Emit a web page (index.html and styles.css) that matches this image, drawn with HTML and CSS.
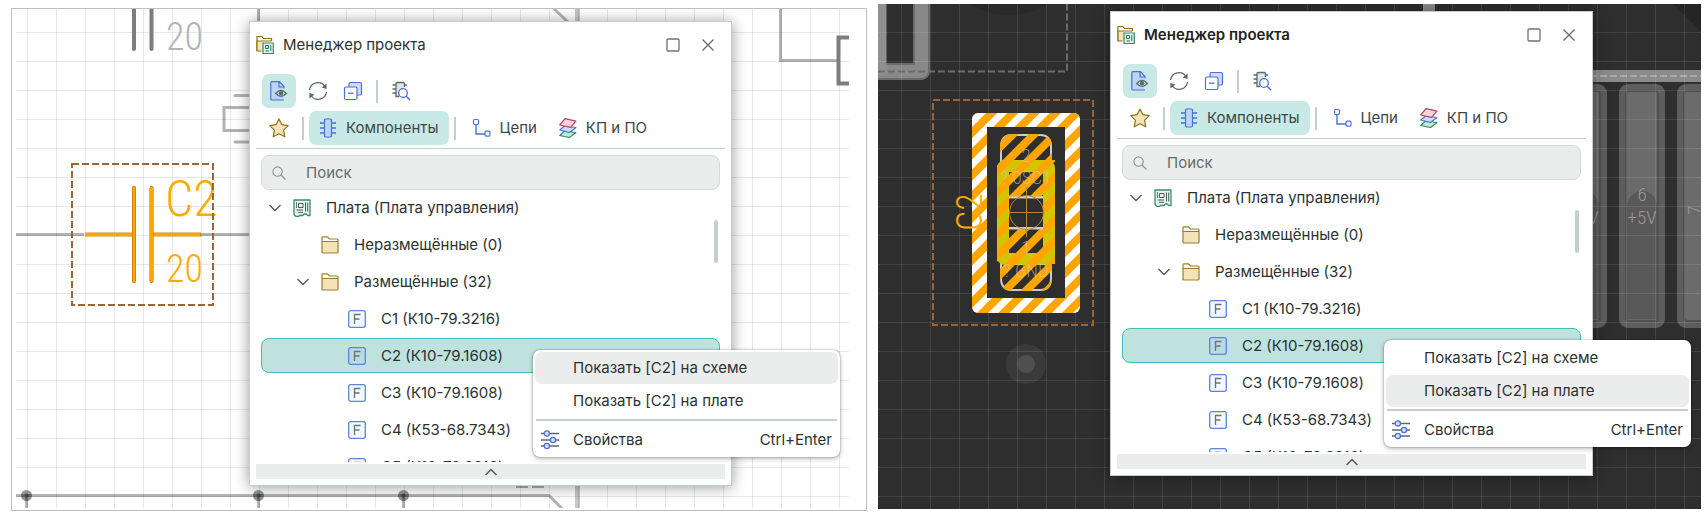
FILE: index.html
```html
<!DOCTYPE html>
<html lang="ru">
<head>
<meta charset="utf-8">
<title>Менеджер проекта</title>
<link rel="stylesheet" href="styles.css">
</head>
<body>
<svg class="sprite" aria-hidden="true">
  <symbol id="i-project" viewBox="0 0 18 20">
    <path d="M1 16V1.500h5l1.500 2h8V6" fill="#fff" stroke="#8c7318" stroke-width="1.200"/>
    <path d="M1 6h6.500v10H1z" fill="#f5e3b8"/><path d="M5.500 16H1V6h14.500" fill="none" stroke="#8c7318" stroke-width="1.200"/>
    <path d="M7 8h10.300v10.500H7z" fill="#e2f2ea" stroke="#3c8a68" stroke-width="1.200"/>
    <path d="M9.500 10.500h3v3h-3zM14.800 10v6M9.500 16h3.500" fill="none" stroke="#2c7a58" stroke-width="1"/>
  </symbol>
  <symbol id="i-docview" viewBox="0 0 20 20">
    <path d="M2 .7h8l4 4.300V19H2z" fill="#bdd4f5"/>
    <path d="M15 7.500V5.500L10.500.700H3Q1.800.700 1.800 2v16Q1.800 19 3 19h12M10 1v5h5" fill="none" stroke="#4a70dc" stroke-width="1.200"/>
    <path d="M6.800 12.500Q12 6.300 17.300 12.500 12 18.300 6.800 12.500z" fill="#c9e9e6" stroke="#5d6b69" stroke-width="1.400"/>
    <circle cx="12" cy="12.300" r="2.200" fill="#5d6b69"/>
  </symbol>
  <symbol id="i-refresh" viewBox="0 0 20 20">
    <path d="M1.500 9a8.500 8.500 0 0 1 15.500-3.500M18.500 11a8.500 8.500 0 0 1-15.500 3.500" fill="none" stroke="#5d6b69" stroke-width="1.300"/>
    <path d="M18.600 2.500v5.500l-5-1.500zM1.400 17.500v-5.500l5 1.500z" fill="#5d6b69"/>
  </symbol>
  <symbol id="i-collapse" viewBox="0 0 20 20">
    <rect x="6" y="1.500" width="12.500" height="12.500" rx="1.500" fill="#cddcf8" stroke="#4a70dc" stroke-width="1.200"/>
    <rect x="1.500" y="6" width="12.500" height="12.500" rx="1.500" fill="#fff" stroke="#4a70dc" stroke-width="1.200"/>
    <path d="M5 12.200h5.500" stroke="#4a70dc" stroke-width="1.300"/>
  </symbol>
  <symbol id="i-chipsearch" viewBox="0 0 20 20">
    <path d="M5 2h8v14H5z" fill="#dfe4e3"/>
    <path d="M13.500 6V2.500Q13.500 1.500 12.500 1.500h-6Q5 1.500 5 2.500v13h3M1.500 4H5M1.500 8H5M1.500 12H5M13.500 4H16" fill="none" stroke="#5d6b69" stroke-width="1.300"/>
    <circle cx="12" cy="12" r="4.300" fill="#fff" stroke="#4a70dc" stroke-width="1.300"/>
    <path d="M15.200 15.200l3.800 3.800" stroke="#4a70dc" stroke-width="1.400"/>
  </symbol>
  <symbol id="i-star" viewBox="0 0 20 20">
    <path d="M10 1l2.900 5.700 6.300.9-4.600 4.500 1.200 6.700L10 15.800l-5.800 3 1.200-6.700L.8 7.600l6.300-.9z" fill="#f5e3b8" stroke="#8c7318" stroke-width="1.200" stroke-linejoin="round"/>
  </symbol>
  <symbol id="i-chip" viewBox="0 0 20 20">
    <rect x="6.500" y="1" width="7" height="18" rx="1.200" fill="#bdd4f5" stroke="#4a70dc" stroke-width="1.200"/>
    <path d="M2 5h4.500M2 10h4.500M2 15h4.500M13.500 5H18M13.500 10H18M13.500 15H18" stroke="#4a70dc" stroke-width="1.300"/>
    <path d="M3 4.500v1M17 4.500v1" stroke="#4a70dc"/>
  </symbol>
  <symbol id="i-net" viewBox="0 0 20 20">
    <path d="M4 6.500v9.500h9" fill="none" stroke="#4a70dc" stroke-width="1.400"/>
    <rect x="1.500" y="1.500" width="5" height="5" rx="1.200" fill="#fff" stroke="#4a70dc" stroke-width="1.200"/>
    <rect x="13" y="13.200" width="5" height="5" rx="1.200" fill="#fff" stroke="#4a70dc" stroke-width="1.200"/>
  </symbol>
  <symbol id="i-layers" viewBox="0 0 20 20">
    <path d="M6.500 13l11.500 1.500-6.500 5L1.700 17.500z" fill="#c5ead9" stroke="#2f8a63" stroke-width="1.100" stroke-linejoin="round"/>
    <path d="M6.500 8l11.500 1.500-6.500 5L1.700 12z" fill="#cddcf8" stroke="#4a70dc" stroke-width="1.100" stroke-linejoin="round"/>
    <path d="M7 .6l11 2.500-5.500 6.300L1.700 7z" fill="#fad4d8" stroke="#b04a5c" stroke-width="1.200" stroke-linejoin="round"/>
  </symbol>
  <symbol id="i-search" viewBox="0 0 14 14">
    <circle cx="5.600" cy="5.600" r="4.700" fill="none" stroke="#8b9796" stroke-width="1.100"/><path d="M9 9l4.500 4.500" stroke="#8b9796" stroke-width="1.200"/>
  </symbol>
  <symbol id="i-board" viewBox="0 0 18 18">
    <path d="M1 1h16v15.500h-2.500l-1-1.500H11l-1 1.500H6.500l-1 1H3L1 15.500z" fill="#e6f4ee" stroke="#3c8a68" stroke-width="1.300" stroke-linejoin="round"/>
    <path d="M5.500 4.500H10v4H5.500zM12.500 3.500v9M14.700 3.500v9M3.500 11h6.500M5 13.300h5" fill="none" stroke="#4c5a58" stroke-width="1"/>
    <path d="M3.500 3v6" stroke="#4c5a58" stroke-width=".8"/>
  </symbol>
  <symbol id="i-folder" viewBox="0 0 18 18">
    <path d="M1 5.500h16V16q0 1-1 1H2q-1 0-1-1z" fill="#f5e3b8"/>
    <path d="M1 5.500V1.500Q1 .8 2 .8h4.500L8.500 3H16q1 0 1 1v12q0 1-1 1H2q-1 0-1-1zM1 5.500h16" fill="none" stroke="#98802a" stroke-width="1.200"/>
  </symbol>
  <symbol id="i-part" viewBox="0 0 18 18">
    <rect x=".7" y=".7" width="16.600" height="16.600" rx="2" fill="#4a70dc" fill-opacity=".06" stroke="#5f83e2" stroke-width="1.300"/>
    <path d="M6.500 14V4.500h6M6.500 9h5" fill="none" stroke="#6a7674" stroke-width="1.300"/>
  </symbol>
  <symbol id="i-down" viewBox="0 0 12 8"><path d="M0.500 1L6 6.500 11.500 1" fill="none" stroke="#4c5a58" stroke-width="1.300"/></symbol>
  <symbol id="i-up" viewBox="0 0 12 8"><path d="M0.500 7L6 1.500 11.500 7" fill="none" stroke="#4c5a58" stroke-width="1.500"/></symbol>
  <symbol id="i-max" viewBox="0 0 14 14"><rect x="1" y="1" width="12" height="12" rx="1" fill="none" stroke="#6a7674" stroke-width="1.300"/></symbol>
  <symbol id="i-close" viewBox="0 0 14 14"><path d="M1.500 1.500l11 11M12.500 1.500l-11 11" stroke="#5d6b69" stroke-width="1.300"/></symbol>
  <symbol id="i-props" viewBox="0 0 18 20">
    <path d="M0 3.500h18M0 10h18M0 16h18" stroke="#5d6b69" stroke-width="1.300"/>
    <g fill="#d5e2fb" stroke="#4a70dc" stroke-width="1.300"><circle cx="5.800" cy="3.500" r="2.600"/><circle cx="12" cy="10" r="2.600"/><circle cx="5.800" cy="16" r="2.600"/></g>
  </symbol>
</svg>

<main class="screens">
  <section class="pane pane-light">
    <svg class="drawing" aria-hidden="true">
      <defs>
        <pattern id="grid-light" x="15" y="23" width="29" height="29" patternUnits="userSpaceOnUse"><path d="M.5 0v29M0 .5h29" stroke="#000" stroke-opacity=".09"/></pattern>
      </defs>
      <svg class="sheet">
      <rect x="4" y="0" width="833" height="499" fill="url(#grid-light)"/>
      <g fill="none" stroke="#000" stroke-opacity=".3">
        <path d="M4 225.500h68M189 225.500h60" stroke-width="3"/>
        <path d="M240 98.500h-28v23h28M223 86.500h30M223 133h30" stroke-width="3" stroke-linecap="round"/>
        <path d="M4 486.500h533l14 14" stroke-width="3"/>
        <path d="M14.500 487v12M246.500 487v12M391.500 487v12M246.500 0v14M768.500 0v51.500h58" stroke-width="3"/>
        <path d="M542 0l14 13" stroke-width="3"/>
        <path d="M565.500 0v499" stroke-width="5" stroke-opacity=".22"/>
        <path d="M504 478h12M520 478h12" stroke-width="2"/>
      </g>
      <g stroke="#7d7d7d" stroke-width="4" fill="none" stroke-linecap="round"><path d="M122 0v40M139.500 0v40"/><path d="M838 28.500h-11.500v46H838"/></g>
      <g fill="#000" fill-opacity=".42"><circle cx="14.500" cy="486.500" r="5.500"/><circle cx="246.500" cy="486.500" r="5.500"/><circle cx="391.500" cy="486.500" r="5.500"/></g>
      <g fill="#444"><circle cx="14.500" cy="486.500" r="2"/><circle cx="246.500" cy="486.500" r="2"/><circle cx="391.500" cy="486.500" r="2"/></g>
      <text class="cad" x="154" y="41" font-size="38" fill="#b3b3b3">20</text>
      <path d="M73 225.500h49M139 225.500h50" stroke="#c98a1c" stroke-width="4"/>
      <path d="M73 225.500h49M139 225.500h49" stroke="#ffa500" stroke-width="3"/>
      <path d="M122 179v93M139.500 179v93" stroke="#a06a10" stroke-width="4" stroke-linecap="round"/>
      <path d="M122 179v93M139.500 179v93" stroke="#ffa500" stroke-width="3" stroke-linecap="round"/>
      <text class="cad" x="153" y="207" font-size="50" fill="#fa0">C2</text>
      <text class="cad" x="154" y="273" font-size="38" fill="#fa0">20</text>
      <rect x="60" y="155" width="141" height="141" fill="none" stroke="#9c6532" stroke-width="2" stroke-dasharray="7 3"/>
      </svg>
    </svg>
    <article class="manager manager-a">
      <header class="title">
        <svg class="i-title"><use href="#i-project"/></svg><h1>Менеджер проекта</h1>
        <button class="win" type="button" aria-label="Развернуть"><svg><use href="#i-max"/></svg></button>
        <button class="win" type="button" aria-label="Закрыть"><svg><use href="#i-close"/></svg></button>
      </header>
      <div class="tools">
        <button class="tool on" type="button" aria-label="Просмотр"><svg><use href="#i-docview"/></svg></button>
        <button class="tool" type="button" aria-label="Обновить"><svg><use href="#i-refresh"/></svg></button>
        <button class="tool" type="button" aria-label="Свернуть всё"><svg><use href="#i-collapse"/></svg></button>
        <span class="bar"></span>
        <button class="tool" type="button" aria-label="Найти компонент"><svg><use href="#i-chipsearch"/></svg></button>
      </div>
      <nav class="tabs">
        <button class="tab star" type="button" aria-label="Избранное"><svg><use href="#i-star"/></svg></button>
        <span class="bar"></span>
        <button class="tab on" type="button"><svg><use href="#i-chip"/></svg>Компоненты</button>
        <span class="bar"></span>
        <button class="tab" type="button"><svg><use href="#i-net"/></svg>Цепи</button>
        <button class="tab" type="button"><svg><use href="#i-layers"/></svg>КП и ПО</button>
      </nav>
      <label class="search"><svg><use href="#i-search"/></svg><input type="text" placeholder="Поиск" aria-label="Поиск"></label>
      <div class="body">
        <ul class="tree">
          <li class="l1"><button class="twist" type="button" aria-label="Свернуть"><svg><use href="#i-down"/></svg></button><svg class="ico"><use href="#i-board"/></svg>Плата (Плата управления)</li>
          <li class="l2"><span class="twist"></span><svg class="ico"><use href="#i-folder"/></svg>Неразмещённые (0)</li>
          <li class="l2"><button class="twist" type="button" aria-label="Свернуть"><svg><use href="#i-down"/></svg></button><svg class="ico"><use href="#i-folder"/></svg>Размещённые (32)</li>
          <li class="l3"><span class="twist"></span><svg class="ico"><use href="#i-part"/></svg>C1 (К10-79.3216)</li>
          <li class="l3 picked"><span class="twist"></span><svg class="ico"><use href="#i-part"/></svg>C2 (К10-79.1608)</li>
          <li class="l3"><span class="twist"></span><svg class="ico"><use href="#i-part"/></svg>C3 (К10-79.1608)</li>
          <li class="l3"><span class="twist"></span><svg class="ico"><use href="#i-part"/></svg>C4 (К53-68.7343)</li>
          <li class="l3"><span class="twist"></span><svg class="ico"><use href="#i-part"/></svg>C5 (К10-79.3216)</li>
        </ul>
        <span class="thumb"></span>
      </div>
      <button class="expand" type="button" aria-label="Развернуть панель"><svg><use href="#i-up"/></svg></button>
      <div class="menu menu-a">
        <button class="hover" type="button"><span class="mi"></span>Показать [C2] на схеме</button>
        <button type="button"><span class="mi"></span>Показать [C2] на плате</button>
        <hr>
        <button type="button"><svg class="mi"><use href="#i-props"/></svg>Свойства<kbd>Ctrl+Enter</kbd></button>
      </div>
    </article>
  </section>

  <section class="pane pane-dark">
    <svg class="drawing" aria-hidden="true">
      <defs>
        <pattern id="grid-dark" x="23" y="28" width="29" height="29" patternUnits="userSpaceOnUse"><path d="M.5 0v29M0 .5h29" stroke="#fff" stroke-opacity=".1"/></pattern>
        <pattern id="hatch" width="15" height="15" patternUnits="userSpaceOnUse" patternTransform="translate(99 118) rotate(45)"><rect width="8" height="15" fill="#ffa500"/></pattern>
      </defs>
      <circle cx="131" cy="-64" r="75" fill="#292929"/>
      <path d="M795 0l28 28V0z" fill="#252525"/>
      <path d="M0 67.500h43.500V0" fill="none" stroke="#6b6b6b" stroke-width="17" stroke-linejoin="round"/>
      <path d="M0 67.500h43.500V0" fill="none" stroke="#888" stroke-width="13" stroke-linejoin="round"/>
      <path d="M4 0v67" stroke="#8f8f8f" stroke-width="9" stroke-linecap="round"/>
      <path d="M0 67.500h189V0" fill="none" stroke="#6c6c6c" stroke-width="2" stroke-dasharray="7 3"/>
      <path d="M545 0h12v8h-12zM712 66h111v12H712z" fill="#8b8b8b"/>
      <path d="M712 72h111" stroke="#aaa" stroke-width="2" stroke-dasharray="7 3"/>
      <g fill="#5d5d5d"><rect x="683" y="80" width="46" height="244" rx="9"/><rect x="741" y="80" width="46" height="244" rx="9"/><rect x="799" y="80" width="46" height="244" rx="9"/></g>
      <g fill="#6b6b6b" stroke="#505050" stroke-width="2"><rect x="690" y="87" width="32" height="230" rx="3"/><rect x="748" y="87" width="32" height="230" rx="3"/><rect x="806" y="87" width="32" height="230" rx="3"/></g>
      <path d="M691 202a15 15 0 0 1 30 0v113h-30zM749 202a15 15 0 0 1 30 0v113h-30z" fill="#595959"/>
      <g class="cad" fill="#999" text-anchor="middle"><text x="764" y="197" font-size="19">6</text><text x="764" y="220" font-size="19">+5V</text><text x="706" y="220" font-size="19">+5V</text><text transform="translate(823 206) rotate(-90)" font-size="19">7</text></g>
      <circle cx="148" cy="360" r="20" fill="#3a3a3a"/><circle cx="148" cy="360" r="9" fill="#505050"/>
      <rect x="0" y="0" width="100%" height="100%" fill="url(#grid-dark)"/>
      <rect x="55" y="96" width="160" height="225" fill="none" stroke="#9c6532" stroke-width="2" stroke-dasharray="7 3"/>
      <rect x="94" y="109" width="108" height="200" rx="6" fill="#fff"/>
      <rect x="94" y="109" width="108" height="200" rx="6" fill="url(#hatch)"/>
      <rect x="109" y="123" width="78" height="171" fill="#2e2e2e"/>
      <g stroke="#ccc" stroke-width="2" fill="#2e2e2e"><path d="M123 193v-50q0-12 11-12h28q11 0 11 12v50zM123 224v50q0 12 11 12h28q11 0 11-12v-50z"/></g>
      <rect x="125" y="162" width="46" height="93" rx="2" fill="none" stroke="#d2c600" stroke-width="12" stroke-linejoin="round"/>
      <path d="M122 156v-13q0-13 13-13h26q13 0 13 13v13h3v104h-3v14q0 13-13 13h-26q-13 0-13-13v-14h-3V156zM131 194v30h34v-30z" fill="url(#hatch)" fill-rule="evenodd"/>
      <path d="M131 193.500h34M131 224.500h34" stroke="#ccc" stroke-width="2"/>
      <g fill="none" stroke="#b8862b" stroke-width="1"><circle cx="148.500" cy="208.500" r="17"/><path d="M131 208.500h35M148.500 183v50"/></g>
      <g class="cad" fill="#d8cdb8" fill-opacity=".6" text-anchor="middle" font-size="19"><text x="148" y="158">2</text><text x="148" y="180">? 0SC1</text><text x="148" y="250">1</text><text x="148" y="273">? GND</text></g>
      <text class="cad" transform="translate(104 227) rotate(-90)" font-size="36" fill="#fa0">C2</text>
    </svg>
    <article class="manager manager-b">
      <header class="title">
        <svg class="i-title"><use href="#i-project"/></svg><h1>Менеджер проекта</h1>
        <button class="win" type="button" aria-label="Развернуть"><svg><use href="#i-max"/></svg></button>
        <button class="win" type="button" aria-label="Закрыть"><svg><use href="#i-close"/></svg></button>
      </header>
      <div class="tools">
        <button class="tool on" type="button" aria-label="Просмотр"><svg><use href="#i-docview"/></svg></button>
        <button class="tool" type="button" aria-label="Обновить"><svg><use href="#i-refresh"/></svg></button>
        <button class="tool" type="button" aria-label="Свернуть всё"><svg><use href="#i-collapse"/></svg></button>
        <span class="bar"></span>
        <button class="tool" type="button" aria-label="Найти компонент"><svg><use href="#i-chipsearch"/></svg></button>
      </div>
      <nav class="tabs">
        <button class="tab star" type="button" aria-label="Избранное"><svg><use href="#i-star"/></svg></button>
        <span class="bar"></span>
        <button class="tab on" type="button"><svg><use href="#i-chip"/></svg>Компоненты</button>
        <span class="bar"></span>
        <button class="tab" type="button"><svg><use href="#i-net"/></svg>Цепи</button>
        <button class="tab" type="button"><svg><use href="#i-layers"/></svg>КП и ПО</button>
      </nav>
      <label class="search"><svg><use href="#i-search"/></svg><input type="text" placeholder="Поиск" aria-label="Поиск"></label>
      <div class="body">
        <ul class="tree">
          <li class="l1"><button class="twist" type="button" aria-label="Свернуть"><svg><use href="#i-down"/></svg></button><svg class="ico"><use href="#i-board"/></svg>Плата (Плата управления)</li>
          <li class="l2"><span class="twist"></span><svg class="ico"><use href="#i-folder"/></svg>Неразмещённые (0)</li>
          <li class="l2"><button class="twist" type="button" aria-label="Свернуть"><svg><use href="#i-down"/></svg></button><svg class="ico"><use href="#i-folder"/></svg>Размещённые (32)</li>
          <li class="l3"><span class="twist"></span><svg class="ico"><use href="#i-part"/></svg>C1 (К10-79.3216)</li>
          <li class="l3 picked"><span class="twist"></span><svg class="ico"><use href="#i-part"/></svg>C2 (К10-79.1608)</li>
          <li class="l3"><span class="twist"></span><svg class="ico"><use href="#i-part"/></svg>C3 (К10-79.1608)</li>
          <li class="l3"><span class="twist"></span><svg class="ico"><use href="#i-part"/></svg>C4 (К53-68.7343)</li>
          <li class="l3"><span class="twist"></span><svg class="ico"><use href="#i-part"/></svg>C5 (К10-79.3216)</li>
        </ul>
        <span class="thumb"></span>
      </div>
      <button class="expand" type="button" aria-label="Развернуть панель"><svg><use href="#i-up"/></svg></button>
      <div class="menu menu-b">
        <button type="button"><span class="mi"></span>Показать [C2] на схеме</button>
        <button class="hover" type="button"><span class="mi"></span>Показать [C2] на плате</button>
        <hr>
        <button type="button"><svg class="mi"><use href="#i-props"/></svg>Свойства<kbd>Ctrl+Enter</kbd></button>
      </div>
    </article>
  </section>
</main>
</body>
</html>
```

FILE: styles.css
```css
* { box-sizing: border-box; }
body { margin: 0; background: #fff; font: 400 15px/20px Inter, "Liberation Sans", sans-serif; color: #2b3231; }
button, input, kbd { font: inherit; color: inherit; }
button { margin: 0; padding: 0; border: 0; background: none; display: flex; align-items: center; }
svg { display: block; flex: none; }
.sprite { position: absolute; width: 0; height: 0; }

.screens { display: grid; grid-template-columns: 856fr 823fr; gap: 11px; min-height: 100vh; padding: 4px 7px 4px 11px; }
.pane { position: relative; overflow: hidden; }
.pane-light { border: 1px solid #bfbfbf; background: #fff; margin-top: 4px; }
.pane-dark { background: #2e2e2e; margin-bottom: 2px; }
.drawing { position: absolute; inset: 0; width: 100%; height: 100%; }
.sheet { width: 837px; height: 499px; overflow: hidden; }
.cad { font-family: "Liberation Sans Narrow", "Roboto Condensed", "Open Sans Condensed", Roboto, sans-serif; font-weight: 300; }

.manager { position: absolute; display: flex; flex-direction: column; width: 483px; border: 1px solid #c2cfcf; background: #fff; box-shadow: 0 1px 14px rgba(0, 0, 0, .4); padding-bottom: 6px; }
.manager-a { left: 237px; top: 12px; }
.manager-b { left: 232px; top: 7px; }

.title { display: flex; align-items: center; height: 46px; padding: 0 16px 0 6px; }
.i-title { width: 18px; height: 20px; margin-right: 9px; }
.title h1 { flex: 1; margin: 0; font-size: 15px; font-weight: 400; }
.manager-b .title h1 { font-weight: 600; color: #1d2322; }
.win { margin-left: 21px; }
.win svg { width: 14px; height: 14px; }

.tools { display: flex; align-items: center; height: 34px; margin: 6px 12px 0; gap: 1px; }
.tool { width: 34px; height: 34px; justify-content: center; border-radius: 7px; }
.tool.on { margin-right: 4px; }
.tool svg, .tab svg { width: 20px; height: 20px; }
.on { background: #c9e9e6; }
.bar { width: 2px; height: 23px; margin: 0 5px; background: #c2cfcf; }

.tabs { display: flex; align-items: center; margin: 3px 6px 0; padding: 0 6px 3px; border-bottom: 1px solid #c2cfcf; }
.tab { height: 34px; gap: 8px; padding: 0 10px 0 11px; border-radius: 7px; color: #3d4746; }
.tab.on { padding-left: 9px; }
.tab.star { padding: 0 8px 0 7px; }

.search { display: flex; align-items: center; gap: 20px; height: 35px; margin: 6px 11px 0; padding: 0 10px; border: 1px solid #d3dcdb; border-radius: 8px; background: #ebedec; }
.search svg { width: 14px; height: 14px; }
.search input { flex: 1; min-width: 0; padding: 0; border: 0; outline: 0; background: none; }
.search input::placeholder { color: #626c6b; opacity: 1; }

.body { position: relative; height: 272px; overflow: hidden; margin: 0 11px; }
.tree { margin: 0; padding: 0; list-style: none; }
.tree li { display: flex; align-items: center; height: 35px; margin: 0 0 2px; border: 1px solid transparent; border-radius: 8px; }
.l1 { padding-left: 7px; }
.l2 { padding-left: 35px; }
.l3 { padding-left: 62px; }
.tree .picked { border-color: #3fc0b8; background: #bfe2df; }
.twist { width: 12px; margin-right: 12px; }
.twist svg { width: 12px; height: 8px; }
.ico { width: 18px; height: 18px; margin-right: 15px; }
.thumb { position: absolute; right: 2px; top: 30px; width: 4px; height: 43px; border-radius: 2px; background: #c2cfcf; }

.expand { justify-content: center; height: 15px; margin: 2px 6px 0; background: #ebedec; }
.expand svg { width: 12px; height: 8px; }

.menu { position: absolute; top: 328px; width: 307px; padding: 2px 2px 1px; border-radius: 7px; background: #fff; box-shadow: 0 0 2px rgba(0, 0, 0, .4), 0 2px 5px rgba(0, 0, 0, .25); }
.menu-a { left: 283px; }
.menu-b { left: 273px; }
.menu button { width: 100%; height: 32px; margin-bottom: 1px; padding: 0 6px; border-radius: 7px; }
.menu button:last-child { margin: 0; }
.menu hr { height: 2px; margin: 2px 1px 3px; border: 0; background: #c2cfcf; }
.menu .hover { background: #ebedec; }
.mi { width: 18px; height: 20px; margin-right: 14px; }
.menu kbd { margin-left: auto; }
```
